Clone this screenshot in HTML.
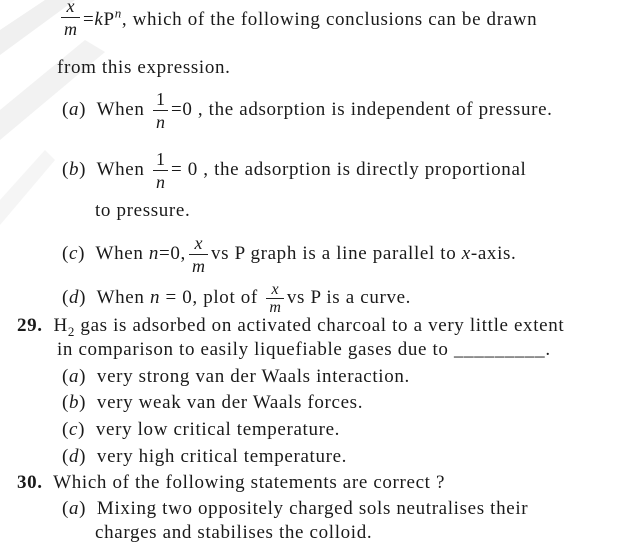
<!DOCTYPE html>
<html><head><meta charset="utf-8"><style>
body{margin:0;width:638px;height:547px;background:#fff;position:relative;overflow:hidden;font-family:"Liberation Serif",serif;color:#1a1a1a;}
.l{position:absolute;white-space:nowrap;font-size:19px;letter-spacing:0.65px;line-height:20px;}
.f{display:inline-block;vertical-align:middle;text-align:center;font-size:18px;line-height:22px;font-style:italic;margin:-24px 3px;letter-spacing:0;}
.f span{display:block;padding:0 3px;}
.f span:first-child{border-bottom:1px solid #222;}
i{font-style:italic}
b{font-weight:bold}
sub,sup{line-height:0}
</style></head><body>
<svg style="position:absolute;left:0;top:0" width="160" height="260">
<polygon points="0,30 45,0 75,0 0,55" fill="#f0f0f0"/>
<polygon points="0,110 85,40 105,52 0,140" fill="#f2f2f2"/>
<polygon points="0,200 45,150 55,160 0,225" fill="#f5f5f5"/>
</svg>
<div class="l" style="left:58px;top:10px"><span class="f" style="vertical-align:-10px"><span>x</span><span>m</span></span>=<i>k</i>P<sup style="font-size:13px"><i>n</i></sup>, which of the following conclusions can be drawn</div>
<div class="l" style="left:57px;top:58px">from this expression.</div>
<div class="l" style="left:62px;top:100px">(<i>a</i>)&nbsp; When <span class="f" style="font-style:normal"><span>1</span><span><i>n</i></span></span>=0 , the adsorption is independent of pressure.</div>
<div class="l" style="left:62px;top:160px">(<i>b</i>)&nbsp; When <span class="f" style="font-style:normal"><span>1</span><span><i>n</i></span></span>= 0 , the adsorption is directly proportional</div>
<div class="l" style="left:95px;top:201px">to pressure.</div>
<div class="l" style="left:62px;top:244px">(<i>c</i>)&nbsp; When <i>n</i>=0,<span class="f"><span>x</span><span>m</span></span>vs P graph is a line parallel to <i>x</i>-axis.</div>
<div class="l" style="left:62px;top:288px">(<i>d</i>)&nbsp; When <i>n</i> = 0, plot of <span class="f" style="font-size:16px;line-height:17px"><span>x</span><span>m</span></span>vs P is a curve.</div>
<div class="l" style="left:17px;top:316px"><b>29.</b>&nbsp; H<sub style="font-size:13px">2</sub> gas is adsorbed on activated charcoal to a very little extent</div>
<div class="l" style="left:57px;top:340px">in comparison to easily liquefiable gases due to _________.</div>
<div class="l" style="left:62px;top:367px">(<i>a</i>)&nbsp; very strong van der Waals interaction.</div>
<div class="l" style="left:62px;top:393px">(<i>b</i>)&nbsp; very weak van der Waals forces.</div>
<div class="l" style="left:62px;top:420px">(<i>c</i>)&nbsp; very low critical temperature.</div>
<div class="l" style="left:62px;top:447px">(<i>d</i>)&nbsp; very high critical temperature.</div>
<div class="l" style="left:17px;top:473px"><b>30.</b>&nbsp; Which of the following statements are correct ?</div>
<div class="l" style="left:62px;top:499px">(<i>a</i>)&nbsp; Mixing two oppositely charged sols neutralises their</div>
<div class="l" style="left:95px;top:523px">charges and stabilises the colloid.</div>
</body></html>
